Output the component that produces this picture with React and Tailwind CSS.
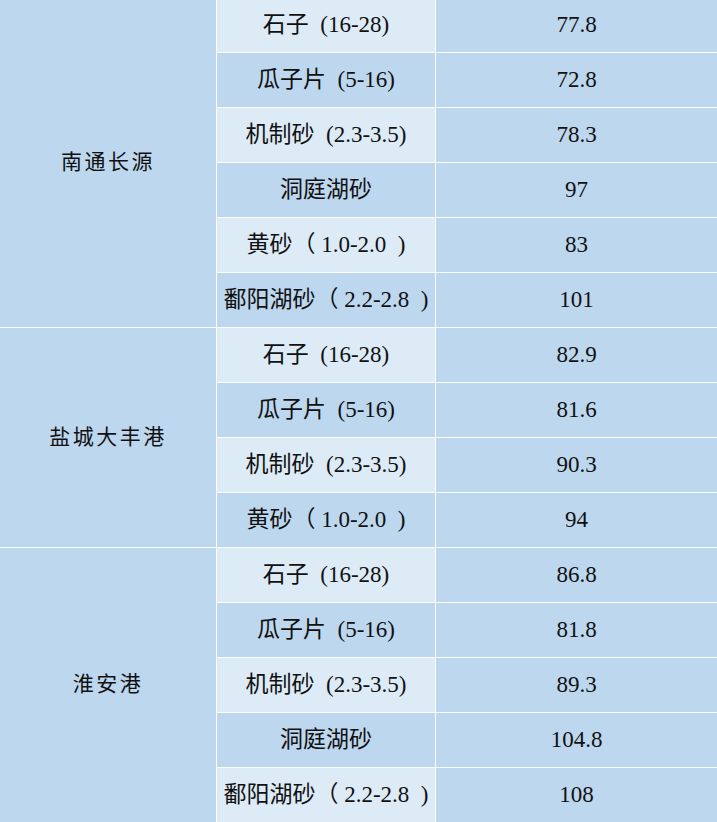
const groups = [
  {
    port: '南通长源',
    span: 'row-span-6',
    rows: [
      ['石子  (16-28)', '77.8'],
      ['瓜子片  (5-16)', '72.8'],
      ['机制砂  (2.3-3.5)', '78.3'],
      ['洞庭湖砂', '97'],
      ['黄砂（ 1.0-2.0  )', '83'],
      ['鄱阳湖砂（ 2.2-2.8  )', '101'],
    ],
  },
  {
    port: '盐城大丰港',
    span: 'row-span-4',
    rows: [
      ['石子  (16-28)', '82.9'],
      ['瓜子片  (5-16)', '81.6'],
      ['机制砂  (2.3-3.5)', '90.3'],
      ['黄砂（ 1.0-2.0  )', '94'],
    ],
  },
  {
    port: '淮安港',
    span: 'row-span-5',
    rows: [
      ['石子  (16-28)', '86.8'],
      ['瓜子片  (5-16)', '81.8'],
      ['机制砂  (2.3-3.5)', '89.3'],
      ['洞庭湖砂', '104.8'],
      ['鄱阳湖砂（ 2.2-2.8  )', '108'],
    ],
  },
];

const App = () => {
  let index = 0;

  return (
    <div className="w-[717px] h-[822px] overflow-hidden bg-white">
      <div
        className="-mt-[2px] grid grid-cols-[216px_218px_1fr] auto-rows-[54px] gap-px bg-white text-[#111] font-['Liberation_Serif','Noto_Sans_CJK_SC',serif]"
      >
        {groups.map((group) => (
          <>
            <div
              key={group.port}
              className={`${group.span} flex items-center justify-center bg-[#bdd7ee] text-[21px] tracking-[2.5px]`}
            >
              {group.port}
            </div>
            {group.rows.map(([name, price]) => {
              const light = index++ % 2 === 0;
              return (
                <>
                  <div
                    key={name + price}
                    className={`flex items-center justify-center whitespace-pre text-[23px] ${light ? 'bg-[#ddebf7]' : 'bg-[#bdd7ee]'}`}
                  >
                    {name}
                  </div>
                  <div className="flex items-center justify-center bg-[#bdd7ee] text-[23px]">
                    {price}
                  </div>
                </>
              );
            })}
          </>
        ))}
      </div>
    </div>
  );
};

export default App;
